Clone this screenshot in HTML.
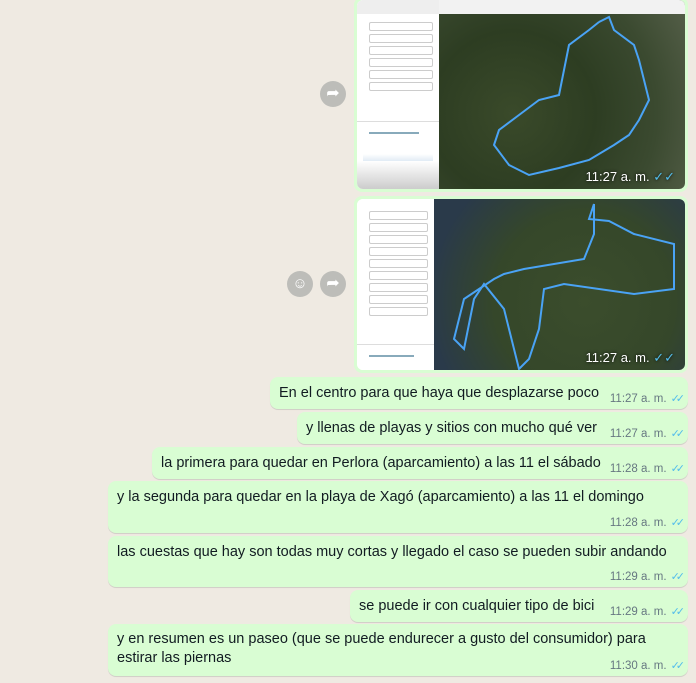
<!DOCTYPE html>
<html><head><meta charset="utf-8"><style>
body{margin:0;width:696px;height:683px;overflow:hidden;background:#efeae2;font-family:"Liberation Sans",sans-serif;position:relative}
.b{position:absolute;right:8px;background:#d9fdd3;border-radius:8px;box-shadow:0 1px 0.5px rgba(11,20,26,.13);color:#111b21;font-size:14.5px;box-sizing:border-box}
.t{position:absolute;left:9px;top:7px;white-space:nowrap;line-height:19px}
.tm{position:absolute;right:7px;bottom:4px;font-size:11.5px;color:#667781;white-space:nowrap}
.ck{color:#53bdeb;font-size:11px;letter-spacing:-4px;margin-left:4px}
.img{position:absolute;right:8px;background:#d9fdd3;border-radius:8px;padding:3px;box-sizing:border-box}
.in{position:relative;width:100%;height:100%;border-radius:6px;overflow:hidden;background:#fff}
.map{position:absolute;top:0;bottom:0;right:0;background:radial-gradient(circle at 30% 60%,#3a4a2a,#2d3d22 40%,#3b4a30 70%,#56604a)}
.side{position:absolute;left:0;top:0;bottom:0;background:#fff}
.ln{height:7px;margin:3px 6px 0 12px;border:1px solid #ccc;border-radius:2px}
.itm{position:absolute;right:10px;font-size:13px;color:#fff;text-shadow:0 0 3px #000}
.circ{position:absolute;width:26px;height:26px;border-radius:50%;background:#bdbdb9;color:#fff;text-align:center;line-height:26px;font-size:16px}
</style></head><body>
<div class="img" style="top:-3px;left:354px;height:195px">
<div class="in">
<div class="side" style="width:82px">
<div style="height:14px;background:#eee"></div>
<div class="ln" style="margin-top:8px"></div><div class="ln"></div><div class="ln"></div><div class="ln"></div><div class="ln"></div><div class="ln"></div>
<div style="height:1px;background:#ddd;margin:30px 0 10px"></div>
<div style="height:2px;background:#8ab;margin:0 20px 20px 12px"></div>
<div style="height:12px;margin:20px 6px;background:linear-gradient(#fff,#cde)"></div>
<div style="position:absolute;bottom:0;left:0;right:0;height:28px;background:linear-gradient(#fff,#ccc)"></div>
</div>
<div class="map" style="left:82px">
<svg width="250" height="190" style="position:absolute;left:0;top:0"><polyline fill="none" stroke="#4aa3f5" stroke-width="2" points="160,22 170,17 175,30 195,45 200,60 205,80 210,100 200,120 190,135 175,145 150,160 120,168 90,175 70,165 55,145 60,130 80,115 100,100 120,95 125,70 130,45 150,30 160,22"/></svg>
<div style="position:absolute;left:0;right:0;top:0;height:14px;background:#f2f2f2"></div>
</div>
<div class="itm" style="bottom:4px">11:27 a. m. <span style="color:#53bdeb">✓✓</span></div>
</div></div>
<div class="circ" style="left:320px;top:81px">➦</div>
<div class="img" style="top:196px;left:354px;height:177px">
<div class="in">
<div class="side" style="width:77px">
<div class="ln" style="margin-top:12px"></div><div class="ln"></div><div class="ln"></div><div class="ln"></div><div class="ln"></div><div class="ln"></div><div class="ln"></div><div class="ln"></div><div class="ln"></div>
<div style="height:1px;background:#ddd;margin:28px 0 10px"></div>
<div style="height:2px;background:#8ab;margin:0 20px 20px 12px"></div>
</div>
<div class="map" style="left:77px;background:radial-gradient(circle at 60% 60%,#3b4d2c,#35472a 50%,#2a3a4a 85%)">
<svg width="252" height="171" style="position:absolute;left:0;top:0"><polyline fill="none" stroke="#4aa3f5" stroke-width="2" points="160,5 155,20 175,22 200,35 240,45 240,90 200,95 130,85 110,90 105,130 95,160 85,170 70,110 50,85 40,100 30,150 20,140 30,100 60,80 70,75 90,70 150,60 160,35 160,5"/></svg>
</div>
<div class="itm" style="bottom:4px">11:27 a. m. <span style="color:#53bdeb">✓✓</span></div>
</div></div>
<div class="circ" style="left:287px;top:271px;font-size:15px">☺</div>
<div class="circ" style="left:320px;top:271px">➦</div>

<div class="b" style="left:270px;top:377px;height:32px"><div class="t">En el centro para que haya que desplazarse poco</div><div class="tm">11:27 a. m.<span class="ck">✓✓</span></div></div>
<div class="b" style="left:297px;top:412px;height:32px"><div class="t">y llenas de playas y sitios con mucho qué ver</div><div class="tm">11:27 a. m.<span class="ck">✓✓</span></div></div>
<div class="b" style="left:152px;top:447px;height:32px"><div class="t">la primera para quedar en Perlora (aparcamiento) a las 11 el sábado</div><div class="tm">11:28 a. m.<span class="ck">✓✓</span></div></div>
<div class="b" style="left:108px;top:481px;height:52px"><div class="t">y la segunda para quedar en la playa de Xagó (aparcamiento) a las 11 el domingo</div><div class="tm">11:28 a. m.<span class="ck">✓✓</span></div></div>
<div class="b" style="left:108px;top:536px;height:51px"><div class="t">las cuestas que hay son todas muy cortas y llegado el caso se pueden subir andando</div><div class="tm">11:29 a. m.<span class="ck">✓✓</span></div></div>
<div class="b" style="left:350px;top:590px;height:32px"><div class="t">se puede ir con cualquier tipo de bici</div><div class="tm">11:29 a. m.<span class="ck">✓✓</span></div></div>
<div class="b" style="left:108px;top:624px;height:52px"><div class="t" style="top:6px">y en resumen es un paseo (que se puede endurecer a gusto del consumidor) para<br>estirar las piernas</div><div class="tm">11:30 a. m.<span class="ck">✓✓</span></div></div>
</body></html>
